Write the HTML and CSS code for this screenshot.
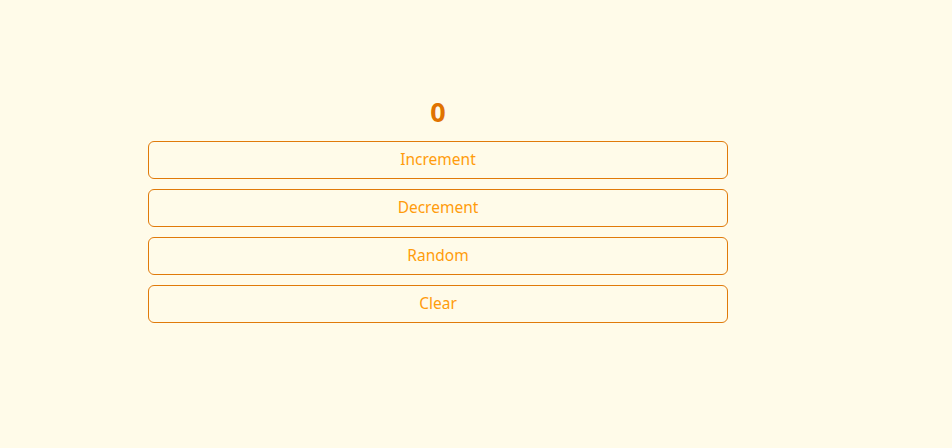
FILE: index.html
```html
<!DOCTYPE html>
<html lang="en">
<head>
<meta charset="utf-8">
<title>Counter</title>
<link rel="stylesheet" href="styles.css">
</head>
<body>
<main class="counter">
  <h1 class="count">0</h1>
  <div class="actions">
    <button class="btn">Increment</button>
    <button class="btn">Decrement</button>
    <button class="btn">Random</button>
    <button class="btn">Clear</button>
  </div>
</main>
</body>
</html>
```
FILE: styles.css
```css
html, body {
  margin: 0;
  padding: 0;
  background: #fffbe9;
  height: 100%;
}
body {
  font-family: "Noto Sans", "Open Sans", sans-serif;
}
.counter {
  width: 580px;
  margin-left: 148px;
  padding-top: 96px;
  display: flex;
  flex-direction: column;
}
.count {
  margin: 0 0 13px;
  text-align: center;
  font-size: 27px;
  line-height: 32px;
  font-weight: 700;
  color: #e07300;
}
.actions {
  display: flex;
  flex-direction: column;
  gap: 10px;
}
.btn {
  height: 38px;
  box-sizing: border-box;
  background: transparent;
  border: 1px solid #e07a0a;
  border-radius: 6px;
  color: #ff9c0c;
  font-family: inherit;
  font-size: 15.5px;
  padding: 0 0 2px;
}
```
